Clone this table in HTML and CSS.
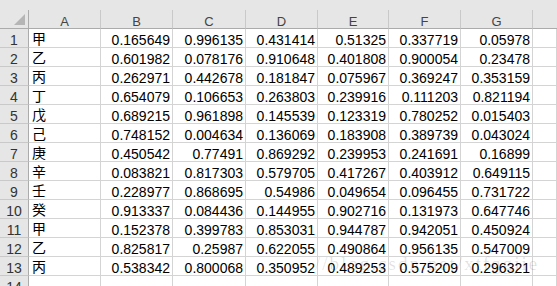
FILE: index.html
```html
<!DOCTYPE html>
<html lang="zh">
<head>
<meta charset="utf-8">
<link rel="stylesheet" href="styles.css">
</head>
<body>
<div class="sheet">
  <div class="strip"></div>
  <div class="corner"><span class="tri"></span></div>
  <div class="ch">A</div><div class="ch">B</div><div class="ch">C</div><div class="ch">D</div><div class="ch">E</div><div class="ch">F</div><div class="ch">G</div><div class="ch last"></div>

  <div class="rh">1</div><div class="c t">甲</div><div class="c">0.165649</div><div class="c">0.996135</div><div class="c">0.431414</div><div class="c">0.51325</div><div class="c">0.337719</div><div class="c">0.05978</div><div class="c"></div>
  <div class="rh">2</div><div class="c t">乙</div><div class="c">0.601982</div><div class="c">0.078176</div><div class="c">0.910648</div><div class="c">0.401808</div><div class="c">0.900054</div><div class="c">0.23478</div><div class="c"></div>
  <div class="rh">3</div><div class="c t">丙</div><div class="c">0.262971</div><div class="c">0.442678</div><div class="c">0.181847</div><div class="c">0.075967</div><div class="c">0.369247</div><div class="c">0.353159</div><div class="c"></div>
  <div class="rh">4</div><div class="c t">丁</div><div class="c">0.654079</div><div class="c">0.106653</div><div class="c">0.263803</div><div class="c">0.239916</div><div class="c">0.111203</div><div class="c">0.821194</div><div class="c"></div>
  <div class="rh">5</div><div class="c t">戊</div><div class="c">0.689215</div><div class="c">0.961898</div><div class="c">0.145539</div><div class="c">0.123319</div><div class="c">0.780252</div><div class="c">0.015403</div><div class="c"></div>
  <div class="rh">6</div><div class="c t">己</div><div class="c">0.748152</div><div class="c">0.004634</div><div class="c">0.136069</div><div class="c">0.183908</div><div class="c">0.389739</div><div class="c">0.043024</div><div class="c"></div>
  <div class="rh">7</div><div class="c t">庚</div><div class="c">0.450542</div><div class="c">0.77491</div><div class="c">0.869292</div><div class="c">0.239953</div><div class="c">0.241691</div><div class="c">0.16899</div><div class="c"></div>
  <div class="rh">8</div><div class="c t">辛</div><div class="c">0.083821</div><div class="c">0.817303</div><div class="c">0.579705</div><div class="c">0.417267</div><div class="c">0.403912</div><div class="c">0.649115</div><div class="c"></div>
  <div class="rh">9</div><div class="c t">壬</div><div class="c">0.228977</div><div class="c">0.868695</div><div class="c">0.54986</div><div class="c">0.049654</div><div class="c">0.096455</div><div class="c">0.731722</div><div class="c"></div>
  <div class="rh">10</div><div class="c t">癸</div><div class="c">0.913337</div><div class="c">0.084436</div><div class="c">0.144955</div><div class="c">0.902716</div><div class="c">0.131973</div><div class="c">0.647746</div><div class="c"></div>
  <div class="rh">11</div><div class="c t">甲</div><div class="c">0.152378</div><div class="c">0.399783</div><div class="c">0.853031</div><div class="c">0.944787</div><div class="c">0.942051</div><div class="c">0.450924</div><div class="c"></div>
  <div class="rh">12</div><div class="c t">乙</div><div class="c">0.825817</div><div class="c">0.25987</div><div class="c">0.622055</div><div class="c">0.490864</div><div class="c">0.956135</div><div class="c">0.547009</div><div class="c"></div>
  <div class="rh">13</div><div class="c t">丙</div><div class="c">0.538342</div><div class="c">0.800068</div><div class="c">0.350952</div><div class="c">0.489253</div><div class="c">0.575209</div><div class="c">0.296321</div><div class="c"></div>
  <div class="rh">14</div><div class="c t"></div><div class="c"></div><div class="c"></div><div class="c"></div><div class="c"></div><div class="c"></div><div class="c"></div><div class="c"></div>
</div>
<div class="watermark">//blog.csdn.net/xtfggjie</div>
</body>
</html>
```

FILE: styles.css
```css
html, body {
  margin: 0;
  padding: 0;
  width: 557px;
  height: 286px;
  overflow: hidden;
  background: #ffffff;
}

.sheet {
  display: grid;
  grid-template-columns: 29px 72px 72px 73px 72px 71px 72px 72px 1fr;
  grid-template-rows: 10px repeat(15, 19px);
  font-family: "Liberation Sans", "Noto Sans CJK SC", sans-serif;
  font-size: 14px;
  color: #000;
}

.strip {
  grid-column: 1 / -1;
  background: #e6e6e6;
}

.corner {
  position: relative;
  background: #e6e6e6;
  border-right: 1px solid #ababab;
  border-bottom: 1px solid #ababab;
}

.tri {
  position: absolute;
  right: 3px;
  bottom: 3px;
  width: 0;
  height: 0;
  border-left: 11px solid transparent;
  border-bottom: 11px solid #b5b5b5;
}

.ch {
  background: #e6e6e6;
  border-right: 1px solid #c9c9c9;
  border-bottom: 1px solid #ababab;
  display: flex;
  align-items: flex-end;
  justify-content: center;
  line-height: 13px;
  color: #444;
  font-size: 13px;
}

.ch.last {
  border-right: none;
}

.rh {
  background: #e6e6e6;
  border-right: 1px solid #ababab;
  border-bottom: 1px solid #c9c9c9;
  display: flex;
  align-items: flex-end;
  justify-content: center;
  line-height: 14px;
  color: #333;
}

.c {
  border-right: 1px solid #d4d4d4;
  border-bottom: 1px solid #d4d4d4;
  display: flex;
  align-items: flex-end;
  justify-content: flex-end;
  padding-right: 2px;
  line-height: 14px;
  white-space: nowrap;
}

.c.t {
  justify-content: flex-start;
  padding-left: 3px;
  padding-right: 0;
  font-family: "Noto Sans CJK SC", sans-serif;
  font-size: 14px;
  line-height: 17px;
}

.watermark {
  position: absolute;
  left: 315px;
  top: 253px;
  font-family: "Liberation Serif", serif;
  font-size: 19px;
  letter-spacing: 2px;
  color: rgba(0, 0, 0, 0.12);
  white-space: nowrap;
  pointer-events: none;
}
```
